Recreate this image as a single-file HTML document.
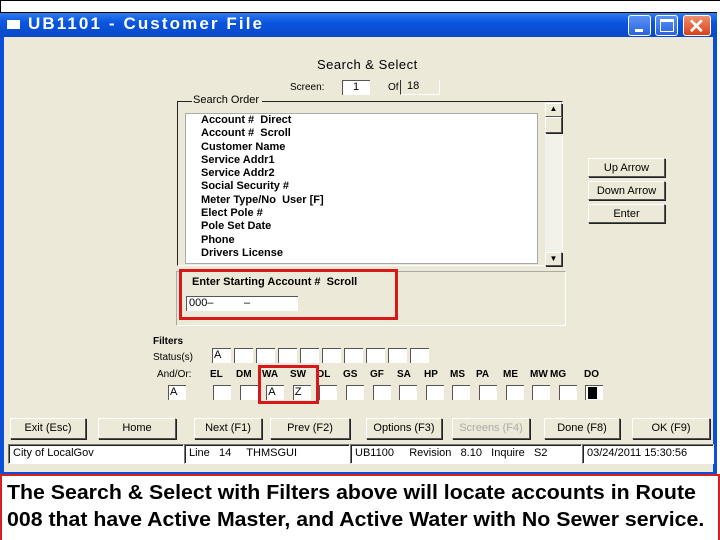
<!DOCTYPE html>
<html><head><meta charset="utf-8"><style>
*{margin:0;padding:0;box-sizing:border-box}
body{width:720px;height:540px;background:#fff;position:relative;overflow:hidden;font-family:"Liberation Sans",sans-serif}
.a{position:absolute}
.win{left:0;top:12px;width:717px;height:463px;background:#0a4fd8;border-top:1px solid #000}
.title{left:0;top:13px;width:717px;height:24px;background:linear-gradient(#2d7bf0,#0a55de 40%,#0848c8)}
.body{left:4px;top:37px;width:709px;height:435px;background:#ece9d8}
.t{font-size:11px;color:#000;white-space:nowrap;line-height:13px}
.b{font-weight:bold}
.box{background:#fff;border-top:1px solid #555;border-left:1px solid #555}
.btn{background:#ece9d8;border:1px solid #fff;border-right-color:#555;border-bottom-color:#555;box-shadow:1px 1px 0 #222;font-size:11px;text-align:center;line-height:18px}
.sb{background:#fff;border:1px solid #777;border-right-color:#fff;border-bottom-color:#fff;box-shadow:inset 1px 1px 0 #222;font-size:11px;line-height:17px;padding-left:4px;white-space:nowrap}
.red{border:3px solid #d81818}
.wb{top:15px;width:23px;height:21px;border:1px solid #fff;border-radius:3px;background:linear-gradient(#5a93f5,#2a62e0)}
.fl{position:absolute;top:368px;font-size:10px;font-weight:bold;white-space:nowrap;line-height:13px}
</style></head><body>
<div class="a" style="left:0;top:0;width:720px;height:1px;background:#000"></div>
<div class="a" style="left:0;top:0;width:1px;height:12px;background:#000"></div>
<div class="a win"></div>
<div class="a title"></div>
<div class="a" style="left:7px;top:20px;width:13px;height:9px;background:#fff"></div>
<div class="a" style="left:28px;top:13px;color:#fff;font-weight:bold;font-size:17px;line-height:22px;letter-spacing:2.1px">UB1101 - Customer File</div>
<div class="a wb" style="left:628px"><div class="a" style="left:6px;top:13px;width:8px;height:3px;background:#fff"></div></div>
<div class="a wb" style="left:655px"><div class="a" style="left:4px;top:3px;width:14px;height:13px;border:1px solid #fff;border-top-width:3px"></div></div>
<div class="a wb" style="left:683px;width:28px;background:linear-gradient(#f0906a,#d9401a)"><div class="a" style="left:4px;top:-2px;color:#fff;font-size:20px;font-weight:bold">✕</div></div>
<div class="a body"></div>

<div class="a t" style="left:317px;top:58px;font-size:13px;letter-spacing:0.5px">Search &amp; Select</div>
<div class="a t" style="left:290px;top:81px;font-size:10px">Screen:</div>
<div class="a box t" style="left:342px;top:80px;width:28px;height:15px;padding-left:10px">1</div>
<div class="a t" style="left:388px;top:81px;font-size:10px">Of</div>
<div class="a t" style="left:400px;top:80px;width:40px;height:15px;border-left:1px solid #333;border-right:1px solid #fff;border-bottom:1px solid #fff;padding-left:6px">18</div>

<div class="a" style="left:177px;top:101px;width:386px;height:165px;border:1px solid #222;border-right:1px solid #fff;border-bottom:1px solid #fff"></div>
<div class="a t" style="left:192px;top:94px;background:#ece9d8;padding:0 3px 0 1px">Search Order</div>
<div class="a" style="left:185px;top:113px;width:353px;height:151px;border:1px solid #aaa;background:#fff"></div>
<div class="a t b" style="left:201px;top:114px;line-height:13.3px;font-size:11px">Account #&nbsp; Direct<br>Account #&nbsp; Scroll<br>Customer Name<br>Service Addr1<br>Service Addr2<br>Social Security #<br>Meter Type/No&nbsp; User [F]<br>Elect Pole #<br>Pole Set Date<br>Phone<br>Drivers License</div>
<div class="a" style="left:545px;top:103px;width:17px;height:163px;background:#f2f1ea"></div>
<div class="a btn" style="left:545px;top:103px;width:17px;height:14px;line-height:10px;font-size:8px">▲</div>
<div class="a btn" style="left:545px;top:117px;width:17px;height:16px"></div>
<div class="a btn" style="left:545px;top:252px;width:17px;height:14px;line-height:12px;font-size:8px">▼</div>

<div class="a btn" style="left:588px;top:158px;width:77px;height:19px">Up Arrow</div>
<div class="a btn" style="left:588px;top:181px;width:77px;height:19px">Down Arrow</div>
<div class="a btn" style="left:588px;top:204px;width:77px;height:19px">Enter</div>

<div class="a" style="left:176px;top:271px;width:390px;height:55px;border:1px solid #aaa;border-right-color:#fff;border-bottom-color:#fff"></div>
<div class="a red" style="left:179px;top:269px;width:219px;height:51px"></div>
<div class="a t b" style="left:192px;top:276px">Enter Starting Account #&nbsp; Scroll</div>
<div class="a box t" style="left:186px;top:296px;width:112px;height:15px;padding-left:2px">000–&nbsp;&nbsp;&nbsp;&nbsp;&nbsp;&nbsp;&nbsp;&nbsp;&nbsp; –</div>

<div class="a t b" style="left:153px;top:335px;font-size:10px">Filters</div>
<div class="a t" style="left:153px;top:351px;font-size:10px">Status(s)</div>
<div class="a t" style="left:157px;top:368px;font-size:10px">And/Or:</div>
<div id="st"></div>
<div id="lb"></div>
<div class="a box t" style="left:168px;top:385px;width:18px;height:15px;padding-left:1px">A</div>
<div id="fb"></div>
<div class="a red" style="left:258px;top:365px;width:61px;height:39px"></div>

<div class="a btn" style="left:10px;top:418px;width:76px;height:21px;line-height:19px">Exit (Esc)</div>
<div class="a btn" style="left:98px;top:418px;width:78px;height:21px;line-height:19px">Home</div>
<div class="a btn" style="left:194px;top:418px;width:68px;height:21px;line-height:19px">Next (F1)</div>
<div class="a btn" style="left:270px;top:418px;width:80px;height:21px;line-height:19px">Prev (F2)</div>
<div class="a btn" style="left:366px;top:418px;width:76px;height:21px;line-height:19px">Options (F3)</div>
<div class="a btn" style="left:452px;top:418px;width:78px;height:21px;line-height:19px;color:#aaa">Screens (F4)</div>
<div class="a btn" style="left:544px;top:418px;width:76px;height:21px;line-height:19px">Done (F8)</div>
<div class="a btn" style="left:632px;top:418px;width:78px;height:21px;line-height:19px">OK (F9)</div>

<div class="a sb" style="left:8px;top:444px;width:176px;height:20px">City of LocalGov</div>
<div class="a sb" style="left:184px;top:444px;width:166px;height:20px">Line&nbsp;&nbsp; 14&nbsp;&nbsp;&nbsp;&nbsp; THMSGUI</div>
<div class="a sb" style="left:350px;top:444px;width:232px;height:20px">UB1100&nbsp;&nbsp;&nbsp;&nbsp; Revision&nbsp;&nbsp; 8.10&nbsp;&nbsp; Inquire&nbsp;&nbsp; S2</div>
<div class="a sb" style="left:582px;top:444px;width:132px;height:20px">03/24/2011 15:30:56</div>

<div class="a" style="left:0;top:474px;width:720px;height:66px;border:2px solid #d82020;border-bottom:none;background:#fff"></div>
<div class="a" style="left:7px;top:480px;font-size:20px;font-weight:bold;line-height:27px;white-space:nowrap;transform:scaleX(1.065);transform-origin:left top;color:#000">The Search &amp; Select with Filters above will locate accounts in Route<br>008 that have Active Master, and Active Water with No Sewer service.</div>

<script>
var s='';
for(var i=0;i<10;i++){s+='<div class="a box t" style="left:'+(212+i*22)+'px;top:348px;width:19px;height:15px;padding-left:1px">'+(i==0?'A':'')+'</div>';}
document.getElementById('st').outerHTML=s;
var f='',L=['','','A','Z','','','','','','','','','','',''];
for(var j=0;j<15;j++){var x=213+j*26.6;
f+='<div class="a box t" style="left:'+x+'px;top:385px;width:18px;height:15px;padding-left:1px">'+L[j]+(j==14?'<div class="a" style="left:2px;top:1px;width:9px;height:12px;background:#000"></div>':'')+'</div>';}
document.getElementById('fb').outerHTML=f;
var N=[['EL',210],['DM',236],['WA',262],['SW',290],['DL',317],['GS',343],['GF',370],['SA',397],['HP',424],['MS',450],['PA',476],['ME',503],['MW',530],['MG',550],['DO',584]],l='';
for(var k=0;k<N.length;k++)l+='<div class="fl" style="left:'+N[k][1]+'px">'+N[k][0]+'</div>';
document.getElementById('lb').outerHTML=l;
</script>
</body></html>
